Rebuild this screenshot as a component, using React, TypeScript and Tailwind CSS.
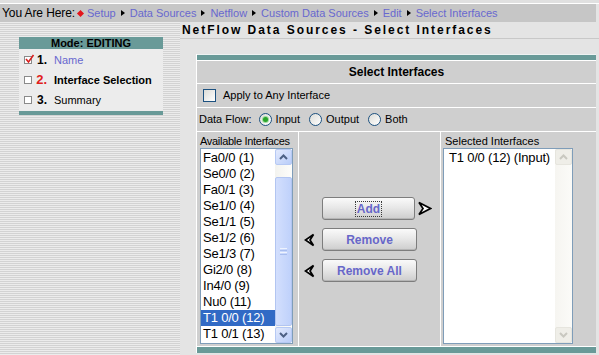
import React from "react";

const TEAL = "bg-[#699a98]";

function Chevron({ dir, color }: { dir: "up" | "down"; color: string }) {
  return (
    <svg width="9" height="6" viewBox="0 0 9 6">
      <polyline
        points={dir === "up" ? "1,5 4.5,1.5 8,5" : "1,1 4.5,4.5 8,1"}
        fill="none"
        stroke={color}
        strokeWidth="2"
      />
    </svg>
  );
}

function ScrollEnabled() {
  return (
    <div className="w-[17px] shrink-0 flex flex-col bg-[image:linear-gradient(to_right,#f3f3ef,#fdfdfb)]">
      <div className="h-[16px] shrink-0 rounded-[2px] border border-[#b6c9f4] bg-[image:linear-gradient(to_bottom_right,#e3eafd,#b9cdf9)] flex items-center justify-center">
        <Chevron dir="up" color="#4d6185" />
      </div>
      <div className="flex-1 flex flex-col pt-[12px] pb-[1px]">
        <div className="flex-1 rounded-[2px] border border-[#b2c5f1] bg-[image:linear-gradient(to_right,#d3dffd,#bfd1fb)] flex items-center justify-center">
          <div className="flex flex-col gap-[1px]">
            <div className="w-[7px] h-[1px] bg-[#eef3fe]" />
            <div className="w-[7px] h-[1px] bg-[#a8bdee]" />
            <div className="w-[7px] h-[1px] bg-[#eef3fe]" />
            <div className="w-[7px] h-[1px] bg-[#a8bdee]" />
          </div>
        </div>
      </div>
      <div className="h-[16px] shrink-0 rounded-[2px] border border-[#b6c9f4] bg-[image:linear-gradient(to_bottom_right,#e3eafd,#b9cdf9)] flex items-center justify-center">
        <Chevron dir="down" color="#4d6185" />
      </div>
    </div>
  );
}

function ScrollDisabled() {
  return (
    <div className="w-[17px] shrink-0 flex flex-col bg-[image:linear-gradient(to_right,#f6f5f1,#fbfbf8)]">
      <div className="h-[16px] shrink-0 rounded-[2px] border border-[#e6e5de] bg-[#efeee8] flex items-center justify-center">
        <Chevron dir="up" color="#c9c8c0" />
      </div>
      <div className="flex-1" />
      <div className="h-[16px] shrink-0 rounded-[2px] border border-[#e6e5de] bg-[#efeee8] flex items-center justify-center">
        <Chevron dir="down" color="#c9c8c0" />
      </div>
    </div>
  );
}

function Arrow({ dir }: { dir: "left" | "right" }) {
  if (dir === "right") {
    return (
      <svg width="15" height="15" viewBox="0 0 15 15" className="shrink-0">
        <polygon points="2,1.5 13.5,7.5 2,13.5 6,7.5" fill="#ffffff" stroke="#000" strokeWidth="1.7" strokeLinejoin="miter" />
      </svg>
    );
  }
  return (
    <svg width="11" height="14" viewBox="0 0 11 14" className="shrink-0">
      <polygon points="9.5,1.5 1.5,7 9.5,12.5 6,7" fill="#ffffff" stroke="#000" strokeWidth="1.7" strokeLinejoin="miter" />
    </svg>
  );
}

function XPButton({ label, width, focus }: { label: string; width: string; focus?: boolean }) {
  return (
    <div
      className={`${width} h-[23px] shrink-0 rounded-[3px] border border-[#7d7d7d] bg-[image:linear-gradient(to_bottom,#fafafa,#e8e8e8_45%,#cdcdcd)] shadow-[inset_0_-1px_0_#b5b5b5] flex items-center justify-center text-[12px] font-bold text-[#6767c9]`}
    >
      {focus ? (
        <span className="h-[16px] px-[1px] border border-dotted border-[#3a3a3a] leading-[14px]">{label}</span>
      ) : (
        <span>{label}</span>
      )}
    </div>
  );
}

function Radio({ checked }: { checked?: boolean }) {
  return (
    <span className="w-[13px] h-[13px] shrink-0 rounded-full border border-[#1c5180] bg-[image:linear-gradient(135deg,#dcdcd7,#ffffff)] flex items-center justify-center">
      {checked && <span className="w-[5px] h-[5px] rounded-full bg-[#2aa52a] shadow-[0_0_0_1px_#9fd89f]" />}
    </span>
  );
}

const available = [
  "Fa0/0 (1)",
  "Se0/0 (2)",
  "Fa0/1 (3)",
  "Se1/0 (4)",
  "Se1/1 (5)",
  "Se1/2 (6)",
  "Se1/3 (7)",
  "Gi2/0 (8)",
  "In4/0 (9)",
  "Nu0 (11)",
  "T1 0/0 (12)",
  "T1 0/1 (13)",
];

function LeftCheck({ checked }: { checked?: boolean }) {
  return (
    <span className="relative w-[8px] h-[8px] shrink-0 border border-[#8a8a8a] bg-white">
      {checked && (
        <svg width="10" height="10" viewBox="0 0 10 10" className="absolute left-[0px] top-[-3px]">
          <polyline points="1,5 3.5,8 8.5,1" fill="none" stroke="#d81e1e" strokeWidth="1.6" />
        </svg>
      )}
    </span>
  );
}

function LeftPanel() {
  return (
    <div className="w-[144px] flex flex-col">
      <div className={`h-[12px] ${TEAL} text-[11px] font-bold leading-[12px] text-center`}>Mode: EDITING</div>
      <div className="h-[62px] bg-[#ececec] pt-[1px]">
        <div className="h-[20px] flex items-center pl-[5px]">
          <LeftCheck checked />
          <span className="w-[15px] text-right text-[12px] font-bold">1.</span>
          <span className="ml-[7px] text-[11px] text-[#6868cf]">Name</span>
        </div>
        <div className="h-[20px] flex items-center pl-[5px]">
          <LeftCheck />
          <span className="w-[15px] text-right text-[13px] font-bold text-[#e0201c]">2.</span>
          <span className="ml-[7px] text-[11px] font-bold">Interface Selection</span>
        </div>
        <div className="h-[20px] flex items-center pl-[5px]">
          <LeftCheck />
          <span className="w-[15px] text-right text-[12px] font-bold">3.</span>
          <span className="ml-[7px] text-[11px]">Summary</span>
        </div>
      </div>
      <div className={`h-[4px] ${TEAL}`} />
    </div>
  );
}

export default function App() {
  const crumbs = ["Data Sources", "Netflow", "Custom Data Sources", "Edit", "Select Interfaces"];
  return (
    <div className="w-[599px] h-[355px] overflow-hidden bg-[#e4e4e4] flex flex-col font-['Liberation_Sans',Arial,sans-serif] text-black">
      <div className="h-[4px] shrink-0 bg-[#e0e0e0] border-b border-white" />
      <div className="h-[18px] shrink-0 mr-[3px] bg-[#c6c6c6] flex items-center pl-[2px] text-[11px] leading-none whitespace-nowrap">
        <span className="text-[12px] tracking-[-0.1px]">You Are Here:</span>
        <span className="ml-[3px] w-[5px] h-[5px] rotate-45 bg-[#e4141a]" />
        <span className="ml-[4px] text-[#6868cf]">Setup</span>
        {crumbs.map((t) => (
          <React.Fragment key={t}>
            <span className="ml-[5px] w-0 h-0 border-l-[4px] border-l-black border-y-[3px] border-y-transparent" />
            <span className="ml-[5px] text-[#6868cf]">{t}</span>
          </React.Fragment>
        ))}
      </div>

      <div className="flex flex-1 min-h-0">
        <div className="w-[180px] shrink-0 bg-[image:repeating-linear-gradient(to_bottom,#ececec_0px,#ececec_1px,#d3d3d3_1px,#d3d3d3_2px)] pt-[15px] pl-[19px]">
          <LeftPanel />
        </div>

        <div className="flex-1 flex flex-col min-w-0">
          <div className="h-[17px] shrink-0 border-b border-[#c8c8c8] pl-[2px] text-[12px] font-bold leading-[16px] tracking-[1.95px] whitespace-nowrap">
            NetFlow Data Sources - Select Interfaces
          </div>
          <div className="h-[15px] shrink-0" />

          <div className="ml-[16px] mr-[3px] border-l border-white flex flex-col bg-[#cfcfcf]">
            <div className="h-[1px] bg-[#eef3f3]" />
            <div className={`h-[5px] ${TEAL}`} />
            <div className="h-[1px] bg-white" />
            <div className="h-[22px] flex items-center justify-center text-[12px] font-bold">Select Interfaces</div>
            <div className="h-[1px] bg-white" />
            <div className="h-[23px] flex items-center pl-[6px] text-[11px]">
              <span className="w-[13px] h-[13px] border border-[#1c5180] bg-[image:linear-gradient(135deg,#dcdcd7,#ffffff)]" />
              <span className="ml-[7px]">Apply to Any Interface</span>
            </div>
            <div className="h-[1px] bg-white" />
            <div className="h-[23px] flex items-center pl-[2px] text-[11px]">
              <span>Data Flow:</span>
              <span className="ml-[7px]"><Radio checked /></span>
              <span className="ml-[4px]">Input</span>
              <span className="ml-[9px]"><Radio /></span>
              <span className="ml-[4px]">Output</span>
              <span className="ml-[9px]"><Radio /></span>
              <span className="ml-[4px]">Both</span>
            </div>
            <div className="h-[1px] bg-white" />

            <div className="h-[214px] flex">
              <div className="w-[101px] shrink-0 pl-[3px] pt-[3px] flex flex-col">
                <div className="text-[11px] leading-[13px] tracking-[-0.3px] whitespace-nowrap">Available Interfaces</div>
                <div className="w-[93px] h-[196px] border border-[#7f9db9] bg-white flex">
                  <div className="flex-1 overflow-hidden pt-[1px]">
                    {available.map((it) => (
                      <div
                        key={it}
                        className={`h-[16px] leading-[16px] pl-[2px] text-[13px] tracking-[-0.2px] whitespace-nowrap ${
                          it === "T1 0/0 (12)" ? "bg-[#316ac5] text-white" : ""
                        }`}
                      >
                        {it}
                      </div>
                    ))}
                  </div>
                  <ScrollEnabled />
                </div>
              </div>
              <div className="w-[1px] bg-white" />
              <div className="w-[141px] shrink-0 flex flex-col pt-[65px] gap-[8px]">
                <div className="flex items-center pl-[6px]">
                  <div className="w-[17px] shrink-0" />
                  <XPButton label="Add" width="w-[93px]" focus />
                  <span className="ml-[2px] flex"><Arrow dir="right" /></span>
                </div>
                <div className="flex items-center pl-[5px]">
                  <div className="w-[18px] shrink-0 flex"><Arrow dir="left" /></div>
                  <XPButton label="Remove" width="w-[95px]" />
                </div>
                <div className="flex items-center pl-[5px]">
                  <div className="w-[18px] shrink-0 flex"><Arrow dir="left" /></div>
                  <XPButton label="Remove All" width="w-[95px]" />
                </div>
              </div>
              <div className="w-[1px] bg-white" />
              <div className="flex-1 pl-[2px] pt-[3px] flex flex-col">
                <div className="pl-[2px] text-[11px] leading-[13px] whitespace-nowrap">Selected Interfaces</div>
                <div className="w-[130px] h-[196px] border border-[#7f9db9] bg-white flex">
                  <div className="flex-1 overflow-hidden pt-[1px]">
                    <div className="h-[16px] leading-[16px] pl-[5px] text-[13px] tracking-[-0.2px] whitespace-nowrap">
                      T1 0/0 (12) (Input)
                    </div>
                  </div>
                  <ScrollDisabled />
                </div>
              </div>
            </div>

            <div className="h-[1px] bg-white" />
            <div className={`h-[6px] ${TEAL}`} />
          </div>
        </div>
      </div>
    </div>
  );
}
